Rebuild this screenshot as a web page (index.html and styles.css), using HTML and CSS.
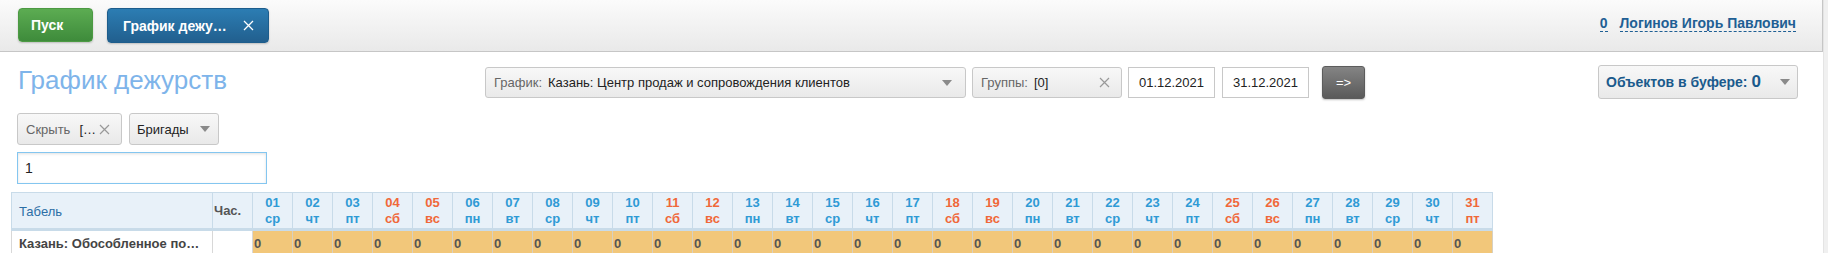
FILE: index.html
```html
<!DOCTYPE html>
<html lang="ru">
<head>
<meta charset="utf-8">
<link rel="stylesheet" href="styles.css">
</head>
<body>
<div class="page">
  <div class="topbar">
    <button class="btn-start">Пуск</button>
    <div class="tab">
      <span class="tab-title">График дежу…</span>
      <svg class="tab-close" width="11" height="11" viewBox="0 0 11 11"><path d="M1 1L10 10M10 1L1 10" stroke="#fff" stroke-width="1.3" fill="none"/></svg>
    </div>
    <div class="user">
      <span class="dash">0</span>
      <span class="dash">Логинов Игорь Павлович</span>
    </div>
  </div>

  <div class="toolbar">
    <h1 class="title">График дежурств</h1>
    <div class="filters">
      <div class="select sel-graph">
        <span class="lbl">График:</span>
        <span class="val">Казань: Центр продаж и сопровождения клиентов</span>
        <span class="arrow"></span>
      </div>
      <div class="select sel-groups">
        <span class="lbl">Группы:</span>
        <span class="val">[0]</span>
        <svg class="x" width="11" height="11" viewBox="0 0 11 11"><path d="M1 1L10 10M10 1L1 10" stroke="#999" stroke-width="1.2" fill="none"/></svg>
      </div>
      <div class="date">01.12.2021</div>
      <div class="date">31.12.2021</div>
      <button class="btn-go">=&gt;</button>
    </div>
    <div class="buffer">
      <span class="buf-text">Объектов в буфере: <span class="buf-num">0</span></span>
      <span class="arrow"></span>
    </div>
  </div>

  <div class="row2">
    <div class="select sel-hide">
      <span class="lbl">Скрыть</span>
      <span class="val">[…</span>
      <svg class="x" width="11" height="11" viewBox="0 0 11 11"><path d="M1 1L10 10M10 1L1 10" stroke="#999" stroke-width="1.2" fill="none"/></svg>
    </div>
    <div class="select sel-brig">
      <span class="val">Бригады</span>
      <span class="arrow"></span>
    </div>
  </div>

  <div class="row3">
    <div class="search">1</div>
  </div>

  <div class="grid-wrap">
    <table class="grid">
      <thead>
        <tr id="head">
          <th class="c-name">Табель</th>
          <th class="c-hours">Час.</th>
        </tr>
      </thead>
      <tbody>
        <tr id="body">
          <td class="c-name name">Казань: Обособленное по…</td>
          <td class="c-hours"></td>
        </tr>
      </tbody>
    </table>
  </div>
</div>
<div class="scroll"></div>
<script src="script.js"></script>
</body>
</html>
```
FILE: script.js
```js
(function () {
  var wd = ['ср','чт','пт','сб','вс','пн','вт'];
  var head = document.getElementById('head');
  var body = document.getElementById('body');
  for (var i = 1; i <= 31; i++) {
    var w = wd[(i - 1) % 7];
    var off = (w === 'сб' || w === 'вс' || i === 31);
    var th = document.createElement('th');
    th.className = 'day' + (off ? ' off' : '');
    th.innerHTML = '<div>' + (i < 10 ? '0' + i : i) + '</div><div>' + w + '</div>';
    head.appendChild(th);
    var td = document.createElement('td');
    td.className = 'val';
    td.textContent = '0';
    body.appendChild(td);
  }
})();
```
FILE: styles.css
```css
* { box-sizing: border-box; }
html, body { margin: 0; padding: 0; }
body {
  display: flex;
  width: 1828px;
  height: 253px;
  overflow: hidden;
  font-family: "Liberation Sans", Arial, sans-serif;
  background: #fff;
  color: #333;
}
.page { width: 1823px; flex: none; }
.scroll { width: 5px; flex: none; background: #f0f0f0; border-left: 1px solid #e4e4e4; }

.topbar {
  height: 52px;
  display: flex;
  align-items: center;
  padding: 0 26px 0 18px;
  background: linear-gradient(#fbfbfb, #e9e9e9);
  border-bottom: 1px solid #c6c6c6;
  border-right: 1px solid #c6c6c6;
}
.btn-start {
  width: 75px;
  height: 34px;
  margin-top: -1px;
  border: 1px solid #4c9a43;
  border-radius: 4px;
  background: linear-gradient(#5cac52, #3e8b3b);
  color: #fff;
  font: bold 14px "Liberation Sans", Arial, sans-serif;
  text-align: left;
  padding: 0 0 0 12px;
  box-shadow: 0 1px 2px rgba(0,0,0,0.2);
}
.tab {
  margin-left: 14px;
  width: 162px;
  height: 35px;
  border: 1px solid #1d5d8c;
  border-radius: 4px;
  background: linear-gradient(#2c7db3, #215f8e);
  display: flex;
  align-items: center;
  padding: 0 0 0 15px;
  color: #fff;
  font-weight: bold;
  font-size: 14px;
  box-shadow: 0 1px 2px rgba(0,0,0,0.2);
}
.tab-close { margin-left: 16px; }
.user {
  margin-left: auto;
  display: flex;
  gap: 12px;
  font-weight: bold;
  font-size: 14px;
  color: #1f5f94;
  margin-top: -4px;
}
.dash { border-bottom: 1px dashed #1f5f94; line-height: 16px; }

.toolbar {
  display: flex;
  align-items: flex-start;
  padding: 13px 25px 0 18px;
  height: 61px;
}
.title {
  margin: 0;
  width: 467px;
  font-size: 26px;
  font-weight: normal;
  color: #7eb4ea;
  line-height: 30px;
  margin-top: 0;
}
.filters { display: flex; align-items: flex-start; padding-top: 2px; }
.select {
  height: 31px;
  border: 1px solid #c8c8c8;
  border-radius: 3px;
  background: linear-gradient(#f8f8f8, #e9e9e9);
  display: flex;
  align-items: center;
  font-size: 13px;
  padding: 0 8px;
  position: relative;
}
.select .lbl { color: #666; }
.select .val { color: #222; margin-left: 6px; }
.arrow {
  width: 0; height: 0;
  border-left: 5px solid transparent;
  border-right: 5px solid transparent;
  border-top: 6px solid #8a8a8a;
  margin-left: auto;
}
.sel-graph { width: 481px; }
.sel-graph .arrow { margin-right: 5px; }
.sel-groups { width: 150px; margin-left: 6px; }
.sel-groups .x { margin-left: auto; margin-right: 3px; }
.date {
  width: 87px;
  height: 31px;
  margin-left: 6px;
  border: 1px solid #c8c8c8;
  font-size: 13px;
  color: #222;
  display: flex;
  align-items: center;
  justify-content: center;
  background: #fff;
}
.date + .date { margin-left: 7px; }
.btn-go {
  margin-left: 13px;
  margin-top: -1px;
  width: 43px;
  height: 33px;
  border: 1px solid #5c5c5c;
  border-radius: 3px;
  background: linear-gradient(#848484, #5a5a5a);
  color: #fff;
  font: 13px "Liberation Sans", Arial, sans-serif;
  box-shadow: 0 1px 2px rgba(0,0,0,0.25);
}
.buffer {
  margin-left: auto;
  width: 200px;
  height: 34px;
  border: 1px solid #c8c8c8;
  border-radius: 3px;
  background: linear-gradient(#f8f8f8, #e9e9e9);
  display: flex;
  align-items: center;
  padding: 0 7px 0 7px;
  color: #1a5a8c;
  font-weight: bold;
  font-size: 14px;
}
.buf-num { font-size: 17px; }

.row2 {
  display: flex;
  gap: 7px;
  padding-left: 17px;
  margin-top: 0;
}
.sel-hide, .sel-brig { height: 32px; font-size: 13px; }
.sel-hide { width: 105px; }
.sel-hide .val { margin-left: 9px; }
.sel-hide .x { margin-left: auto; margin-right: 3px; }
.sel-brig { width: 90px; padding-left: 7px; }
.sel-brig .val { margin-left: 0; }
.sel-brig .arrow { margin-right: 0; }

.row3 { padding: 7px 0 0 17px; }
.search {
  width: 250px;
  height: 32px;
  border: 1px solid #84c6f0;
  box-shadow: inset 0 1px 3px rgba(0,0,0,0.12);
  font-size: 14px;
  color: #222;
  display: flex;
  align-items: center;
  padding-left: 7px;
}

.grid-wrap { padding: 8px 0 0 11px; }
.grid {
  border-collapse: collapse;
  table-layout: fixed;
  font-size: 13px;
}
.grid th {
  background: #e8f1f9;
  border: 1px solid #c8dbe9;
  border-bottom: 3px solid #c8dbe9;
  height: 37px;
  padding: 0;
  font-weight: bold;
}
.grid th.c-name {
  width: 201px;
  text-align: left;
  font-weight: normal;
  color: #2c6ea6;
  padding-left: 7px;
  padding-top: 2px;
}
.grid th.c-hours {
  width: 40px;
  text-align: left;
  color: #555;
  padding-left: 1px;
}
.grid th.day {
  width: 40px;
  color: #2f9ad5;
  font-size: 13px;
  line-height: 16px;
  text-align: center;
}
.grid th.day.off { color: #f0683a; }
.grid td {
  height: 26px;
  padding: 0;
  border-left: 1px solid #d8d8d8;
  border-right: 1px solid #d8d8d8;
}
.grid td.name {
  font-weight: bold;
  color: #444;
  padding-left: 7px;
  white-space: nowrap;
  overflow: hidden;
}
.grid td.val {
  background: #f2c77a;
  font-weight: bold;
  color: #555;
  padding-left: 1px;
  border-left: 1px solid #d6d0c2;
  border-right: 1px solid #d6d0c2;
}
```
